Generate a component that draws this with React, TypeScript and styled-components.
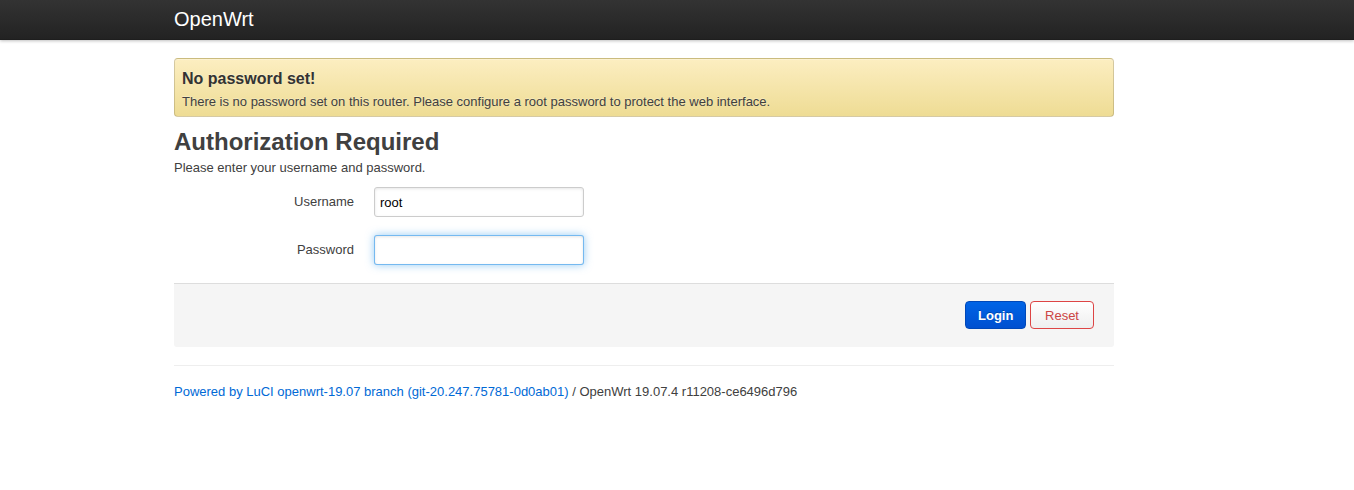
import React from "react";
import styled, { createGlobalStyle } from "styled-components";

const Global = createGlobalStyle`
  html, body { margin: 0; padding: 0; background: #fff; }
  body { font-family: "Liberation Sans", Arial, sans-serif; font-size: 13px; color: #404040; line-height: 18px; }
  * { box-sizing: border-box; }
`;

const Topbar = styled.header`
  height: 40px;
  background: linear-gradient(to bottom, #333333, #222222);
  box-shadow: 0 1px 3px rgba(0,0,0,0.25), inset 0 -1px 0 rgba(0,0,0,0.1);
`;

const Container = styled.div`
  width: 940px;
  margin-left: 174px;
`;

const Brand = styled.a`
  display: block;
  padding: 7px 0 0 0;
  color: #ffffff;
  font-size: 20px;
  line-height: 24px;
  text-decoration: none;
`;

const Main = styled.main`
  padding-top: 18px;
`;

const Alert = styled.div`
  background: linear-gradient(to bottom, #fceec1, #eedc94);
  border: 1px solid rgba(0,0,0,0.15);
  border-radius: 4px;
  box-shadow: inset 0 1px 0 rgba(255,255,255,0.25);
  padding: 9px 7px 6px;
  color: #404040;
  text-shadow: 0 -1px 0 rgba(255,255,255,0.3);
`;

const AlertTitle = styled.h4`
  margin: 0 0 4px;
  font-size: 16px;
  line-height: 22px;
  font-weight: bold;
  color: #333;
`;

const AlertText = styled.p`
  margin: 0;
  font-size: 13px;
  line-height: 16px;
`;

const Heading = styled.h2`
  margin: 10px 0 0;
  font-size: 24px;
  line-height: 30px;
  font-weight: bold;
  color: #404040;
`;

const Intro = styled.p`
  margin: 2px 0 10px;
  font-size: 13px;
  line-height: 18px;
`;

const Fields = styled.div`
  display: flex;
  flex-direction: column;
  gap: 18px;
  padding-bottom: 18px;
`;

const Row = styled.div`
  display: grid;
  grid-template-columns: 180px 210px;
  column-gap: 20px;
  align-items: center;
`;

const Label = styled.label`
  text-align: right;
  font-size: 13px;
  color: #404040;
`;

const Input = styled.input<{ $focus?: boolean }>`
  width: 210px;
  height: 30px;
  padding: 4px 5px;
  font-family: "Liberation Sans", Arial, sans-serif;
  font-size: 13px;
  color: #000;
  border-radius: 3px;
  outline: none;
  border: 1px solid ${p => (p.$focus ? "rgba(82,168,236,0.8)" : "#ccc")};
  box-shadow: ${p =>
    p.$focus
      ? "inset 0 1px 3px rgba(0,0,0,0.1), 0 0 8px rgba(82,168,236,0.6)"
      : "inset 0 1px 3px rgba(0,0,0,0.1)"};
`;

const Actions = styled.div`
  display: flex;
  justify-content: flex-end;
  gap: 4px;
  padding: 17px 20px 18px;
  background: #f5f5f5;
  border-top: 1px solid #ddd;
  border-radius: 0 0 3px 3px;
`;

const Button = styled.button<{ $variant: "primary" | "reset" }>`
  height: 28px;
  padding: 0 12px;
  font-family: "Liberation Sans", Arial, sans-serif;
  font-size: 13px;
  border-radius: 4px;
  cursor: pointer;
  ${p =>
    p.$variant === "primary"
      ? `
    color: #fff;
    font-weight: bold;
    width: 61px;
    background: linear-gradient(to bottom, #0064e6, #0050d0);
    border: 1px solid #0048b8;
    text-shadow: 0 -1px 0 rgba(0,0,0,0.25);
  `
      : `
    color: #c44;
    width: 64px;
    background: linear-gradient(to bottom, #ffffff, #eeeeee);
    border: 1px solid #d44;
  `}
`;

const Footer = styled.footer`
  margin-top: 18px;
  border-top: 1px solid #eee;
  padding-top: 17px;
  font-size: 13px;
  line-height: 18px;
  color: #404040;
`;

const Link = styled.a`
  color: #0069d6;
  text-decoration: none;
`;

export default function App() {
  return (
    <>
      <Global />
      <Topbar>
        <Container>
          <Brand href="#">OpenWrt</Brand>
        </Container>
      </Topbar>
      <Container>
        <Main>
          <Alert>
            <AlertTitle>No password set!</AlertTitle>
            <AlertText>
              There is no password set on this router. Please configure a root password to protect the web interface.
            </AlertText>
          </Alert>
          <Heading>Authorization Required</Heading>
          <Intro>Please enter your username and password.</Intro>
          <Fields>
            <Row>
              <Label>Username</Label>
              <Input defaultValue="root" />
            </Row>
            <Row>
              <Label>Password</Label>
              <Input type="password" $focus />
            </Row>
          </Fields>
          <Actions>
            <Button $variant="primary">Login</Button>
            <Button $variant="reset">Reset</Button>
          </Actions>
          <Footer>
            <Link href="#">Powered by LuCI openwrt-19.07 branch (git-20.247.75781-0d0ab01)</Link> / OpenWrt 19.07.4 r11208-ce6496d796
          </Footer>
        </Main>
      </Container>
    </>
  );
}
